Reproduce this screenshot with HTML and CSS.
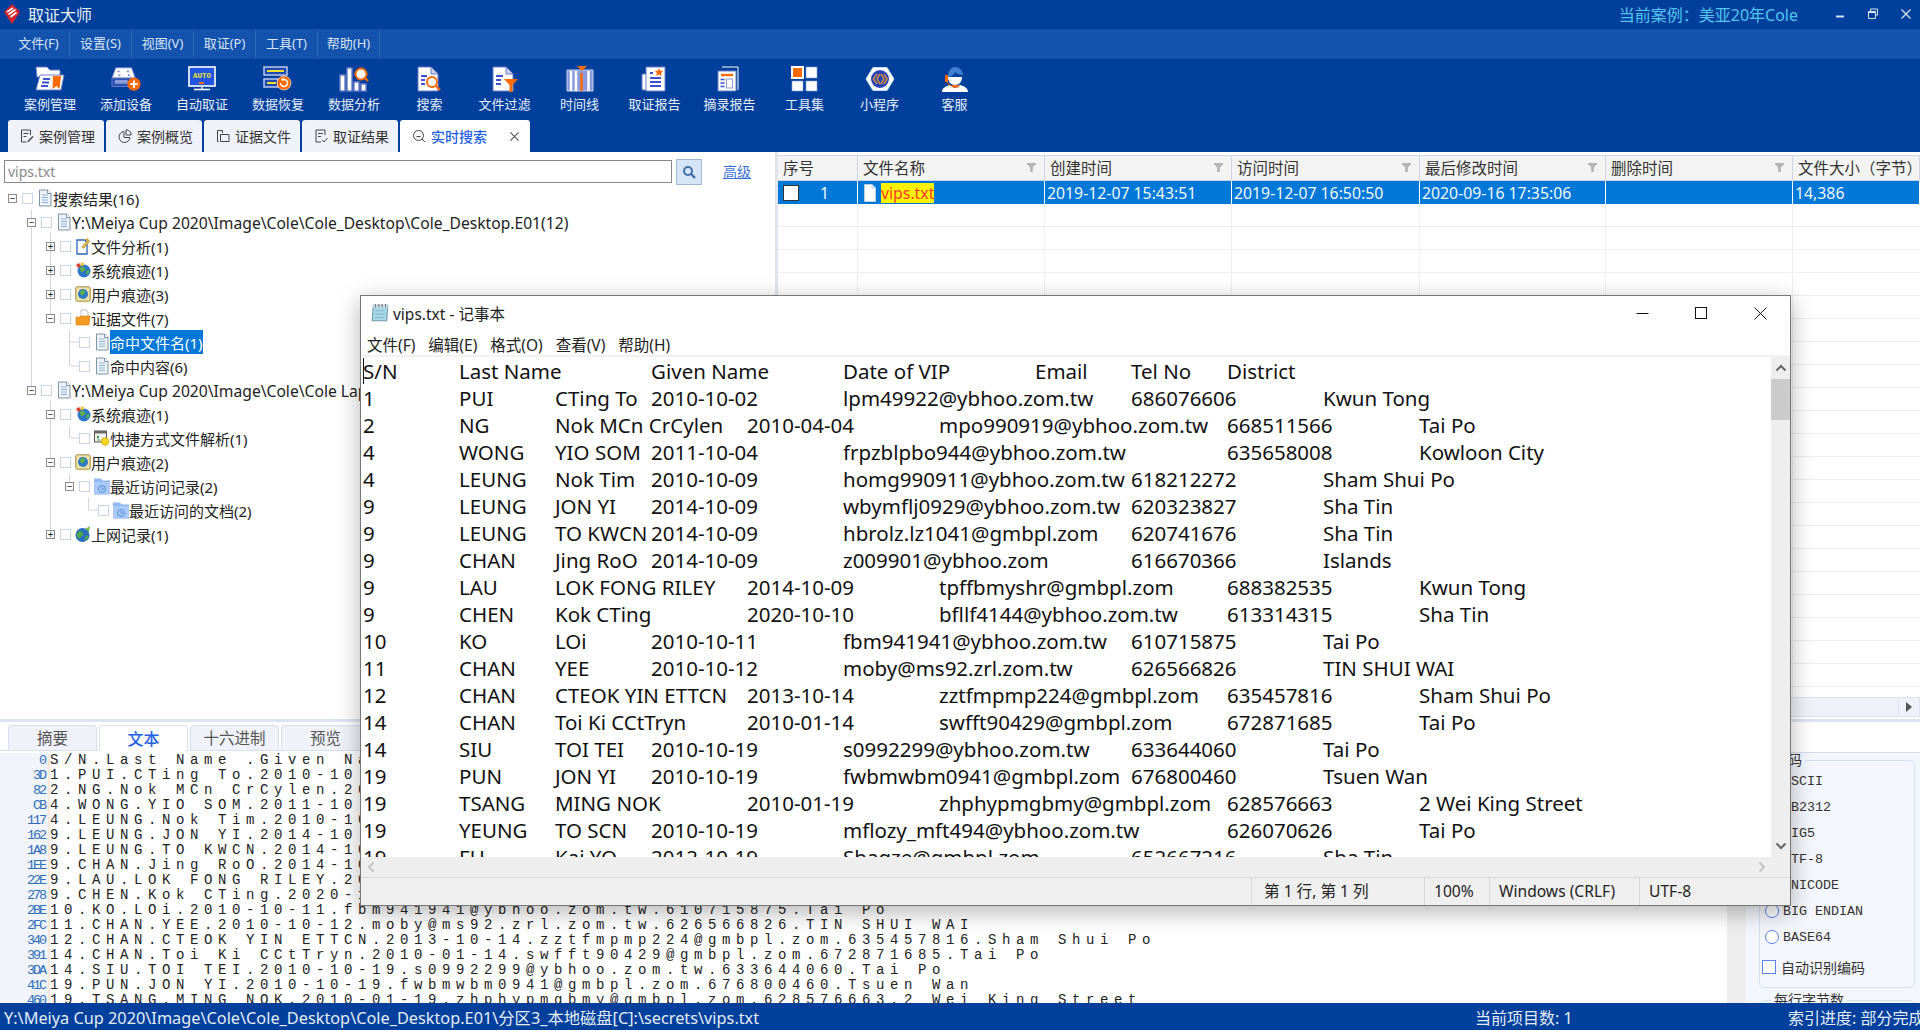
FILE: index.html
```html
<!DOCTYPE html>
<html lang="zh-CN">
  <head>
    <meta charset="UTF-8" />
    <title>取证大师</title>
    <link rel="stylesheet" href="styles.css">
  </head>
  <body>
    <svg class="defs" aria-hidden="true">
      <symbol id="i-doc" viewBox="0 0 16 18"><path d="M2.5 1h8l3.5 3.5v12.500h-11.500z" fill="#eef3fa" stroke="#7d93ab"/><path d="M10.500 1v3.500h3.500" fill="#fff" stroke="#7d93ab"/><path d="M5 6h6M5 8.500h6M5 11h6M5 13.500h6" stroke="#8fb0d6"/></symbol>
      <symbol id="i-analyse" viewBox="0 0 16 18"><path d="M2 3h8l2 3v11h-10z" fill="#fff" stroke="#2a66b8" stroke-width="1.300"/><path d="M7 10l6-7 1.500 1.500-6 7z" fill="#e8c24a" stroke="#8a6a1a" stroke-width=".6"/><path d="M12 1v3M10.500 2.500h3" stroke="#d9a520"/></symbol>
      <symbol id="i-trace" viewBox="0 0 16 18"><circle cx="9" cy="10" r="6.500" fill="#2f78c8"/><path d="M5 7c2-2 4-1 5 0s-1 3-2 4-3 0-3-4zM11 10l3-1 0 3-2 2z" fill="#5db04a"/><path d="M1 4l3-2 2 3-3 2z" fill="#d8402a"/><path d="M6 1.500l3 .500-.5 3-3-.5z" fill="#f2c230"/></symbol>
      <symbol id="i-user" viewBox="0 0 16 18"><rect x=".8" y="1.800" width="14.400" height="14.400" rx="1.500" fill="#efe2a8" stroke="#9c8a3c"/><circle cx="8" cy="9" r="5" fill="#2f78c8"/><path d="M5 7c1.500-2 4-2 5-1s-1 3-2 4-3 0-3-3z" fill="#5db04a"/></symbol>
      <symbol id="i-folder" viewBox="0 0 16 18"><path d="M6 1h5l2 2v7h-7z" fill="#fff" stroke="#bbb"/><path d="M1 8h4l1-1h9l-1 9h-13z" fill="#f59a23" stroke="#d77c10" stroke-width=".6"/></symbol>
      <symbol id="i-link" viewBox="0 0 16 18"><rect x=".5" y="2" width="12" height="11" fill="#f4f4f4" stroke="#555"/><path d="M.5 2h12v2.500h-12z" fill="#666"/><path d="M3 7l2 1-2 1M3 11h3" stroke="#2a9a3c"/><circle cx="11" cy="12.500" r="3.800" fill="#f4d31c" stroke="#a98f10" stroke-dasharray="1.500 1"/></symbol>
      <symbol id="i-recent" viewBox="0 0 16 18"><path d="M0 1.500h7l1.500 2h7.500v14h-16z" fill="#8fb8f4"/><path d="M0 5h16v12.500h-16z" fill="#a9c9f8"/><circle cx="8" cy="12" r="3.500" fill="none" stroke="#5a8ede"/><path d="M8 10v2.200h2" fill="none" stroke="#5a8ede"/></symbol>
      <symbol id="i-web" viewBox="0 0 16 18"><circle cx="7.500" cy="10" r="7" fill="#2c6fc0"/><path d="M3 7c2-2 4-1 5 1s-1 3-2 4-2 2-3 1-2-4 0-6zM10 12l3-2 0 3-3 3z" fill="#4fa746"/><path d="M10 4l5-3-1 6z" fill="#76b84a"/></symbol>
      <symbol id="i-funnel" viewBox="0 0 10 10"><path d="M0 0h10v1.500l-3.500 3.500v5h-3v-5l-3.500-3.500z" fill="#b4b4b4"/></symbol>
    </svg>

    <div class="app">
      <header class="titlebar">
        <svg class="logo" width="18" height="22" viewBox="0 0 18 22"><path d="M9 1l8 8-8 12-8-12z" fill="#d5232c"/><path d="M4 9l6-4M5.500 11.500l7-5M7.500 14l6-4.500" stroke="#fff" stroke-width="1.600"/></svg>
        <span class="app-name">取证大师</span>
        <span class="case-name">当前案例：美亚20年Cole</span>
        <div class="win-btns">
          <svg width="12" height="12" viewBox="0 0 12 12"><path d="M2 8.500h8" stroke="#d8e4f6" stroke-width="2"/></svg>
          <svg width="12" height="12" viewBox="0 0 12 12"><path d="M3.500 3v-2h7v6h-2M1.500 3.500h7v7h-7z" fill="none" stroke="#d8e4f6"/><path d="M1.500 4h7" stroke="#d8e4f6" stroke-width="2"/></svg>
          <svg width="12" height="12" viewBox="0 0 12 12"><path d="M1.500 1.500l9 9M10.500 1.500l-9 9" stroke="#d8e4f6" stroke-width="1.300"/></svg>
        </div>
      </header>

      <nav class="menubar">
        <span class="menu-item">文件(F)</span>
        <span class="menu-item">设置(S)</span>
        <span class="menu-item">视图(V)</span>
        <span class="menu-item">取证(P)</span>
        <span class="menu-item">工具(T)</span>
        <span class="menu-item">帮助(H)</span>
      </nav>

      <section class="toolbar">
        <div class="tools">
          <div class="tool">
            <svg viewBox="0 0 30 26"><path d="M1 1h11l3 3h10v7h-23z" fill="#fff" stroke="#6a7cc8"/><path d="M5 9h24l-3 15h-25z" fill="#fff" stroke="#6a7cc8"/><path d="M8 13h7M7 16.500h7M6 20h7" stroke="#3d50d0" stroke-width="1.800"/><path d="M18 10h8l-1.500 13-3-3-4 3z" fill="#ff6a00"/></svg>
            <span>案例管理</span>
          </div>
          <div class="tool">
            <svg viewBox="0 0 32 26"><path d="M5 1h17l4 11h-25z" fill="#fff" stroke="#6a7cc8"/><path d="M7 5h2M17 5h2M8 9h2M18 9h2" stroke="#6a7cc8" stroke-width="1.500"/><path d="M1 12h25v9h-25z" fill="#2a50b0" stroke="#6a7cc8"/><rect x="4" y="14" width="14" height="4" rx="1" fill="#8b9bdc"/><circle cx="24.500" cy="18.500" r="7" fill="#ff6a00"/><path d="M20.500 18.500h8M24.500 14.500v8" stroke="#fff" stroke-width="2"/></svg>
            <span>添加设备</span>
          </div>
          <div class="tool">
            <svg viewBox="0 0 30 26"><rect x="2" y="1" width="26" height="19" fill="#1f55e0" stroke="#fff" stroke-width="1.600"/><text x="15" y="11.500" class="auto-text">AUTO</text><rect x="12" y="16" width="5" height="2" fill="#ff6a00"/><path d="M14 20h2v3h-2z" fill="#b9c3ea"/><path d="M7 23.500h16" stroke="#fff" stroke-width="1.600"/></svg>
            <span>自动取证</span>
          </div>
          <div class="tool">
            <svg viewBox="0 0 30 26"><rect x="1" y="1" width="23" height="8" fill="#1e49b4" stroke="#c9d0ee" stroke-width="1.400"/><path d="M4 5h17" stroke="#f2e22c" stroke-width="2"/><rect x="1" y="13" width="14" height="8" fill="#1e49b4" stroke="#c9d0ee" stroke-width="1.400"/><path d="M4 17h9" stroke="#f2e22c" stroke-width="2"/><circle cx="21" cy="17" r="7" fill="#ff6a00" stroke="#fff" stroke-width=".6"/><path d="M17.500 17a3.500 3.500 0 1 0 3.500-3.500h-1.500" fill="none" stroke="#fff" stroke-width="1.600"/><path d="M20.500 11.500l-2.500 2 2.500 2z" fill="#fff"/></svg>
            <span>数据恢复</span>
          </div>
          <div class="tool">
            <svg viewBox="0 0 30 26"><rect x="1" y="9" width="5" height="16" fill="#fff" stroke="#6a7cc8" stroke-width="1.400"/><rect x="8" y="2" width="5" height="23" fill="#fff" stroke="#6a7cc8" stroke-width="1.400"/><rect x="15" y="16" width="5" height="9" fill="#fff" stroke="#6a7cc8" stroke-width="1.400"/><rect x="22" y="18" width="5" height="7" fill="#fff" stroke="#6a7cc8" stroke-width="1.400"/><circle cx="22" cy="8" r="5.500" fill="#fff" stroke="#ff6a00" stroke-width="2"/><path d="M26 12l3 3" stroke="#ff6a00" stroke-width="2.400"/></svg>
            <span>数据分析</span>
          </div>
          <div class="tool">
            <svg viewBox="0 0 30 26"><path d="M3 1h13l7 7v17h-20z" fill="#fff" stroke="#6a7cc8"/><path d="M16 1v7h7" fill="#c9d0ee" stroke="#6a7cc8"/><path d="M6 10h6M6 14h4M6 18h4" stroke="#3d50d0" stroke-width="1.800"/><circle cx="17" cy="16" r="5" fill="#fff" stroke="#ff6a00" stroke-width="2"/><path d="M21 20l4 4" stroke="#ff6a00" stroke-width="2.400"/></svg>
            <span>搜索</span>
          </div>
          <div class="tool">
            <svg viewBox="0 0 30 26"><path d="M3 1h13l7 7v17h-20z" fill="#fff" stroke="#6a7cc8"/><path d="M16 1v7h7" fill="#c9d0ee" stroke="#6a7cc8"/><path d="M6 10h7M6 14h5M6 18h5" stroke="#3d50d0" stroke-width="1.800"/><path d="M14 13h14l-5.500 6v7h-3v-7z" fill="#ff6a00"/></svg>
            <span>文件过滤</span>
          </div>
          <div class="tool">
            <svg viewBox="0 0 30 26"><path d="M2 4h26v21h-26z" fill="#8b9bdc" stroke="#c9d0ee"/><path d="M6 5v20M11 5v20M23.500 5v20" stroke="#fff" stroke-width="2.500"/><path d="M16.500 7v18" stroke="#ff6a00" stroke-width="2.500"/><path d="M12 0h10l-5 5z" fill="#ff6a00"/></svg>
            <span>时间线</span>
          </div>
          <div class="tool">
            <svg viewBox="0 0 30 26"><rect x="2" y="8" width="6" height="16" rx="1" fill="#fff" stroke="#6a7cc8"/><path d="M6 1h19v24h-19z" fill="#fff" stroke="#6a7cc8"/><path d="M10 7h3M10 12h11M10 16h11M10 20h11" stroke="#3d50d0" stroke-width="1.800"/><path d="M19 2l1.300 2.700 3 .3-2.200 2 .6 3-2.700-1.500-2.700 1.500.6-3-2.200-2 3-.3z" fill="#ff6a00"/></svg>
            <span>取证报告</span>
          </div>
          <div class="tool">
            <svg viewBox="0 0 30 26"><path d="M7 1h16v23" fill="none" stroke="#fff"/><path d="M3 5h18v20h-18z" fill="#fff" stroke="#6a7cc8"/><path d="M6 9h12" stroke="#ff6a00" stroke-width="2.400"/><path d="M5.500 13.500h4M5.500 17h4M5.500 20.500h4" stroke="#3d50d0" stroke-width="1.600"/><rect x="11.500" y="13" width="6" height="9" fill="#fff" stroke="#8b9bdc"/></svg>
            <span>摘录报告</span>
          </div>
          <div class="tool">
            <svg viewBox="0 0 30 26"><rect x="2" y="1" width="11" height="11" fill="#ff6a00" stroke="#fff" stroke-width="2"/><rect x="16" y="1" width="11" height="11" fill="#fff" stroke="#8b9bdc" stroke-width=".6"/><rect x="2" y="15" width="11" height="10" fill="#fff" stroke="#8b9bdc" stroke-width=".6"/><rect x="16" y="15" width="11" height="10" fill="#fff" stroke="#8b9bdc" stroke-width=".6"/></svg>
            <span>工具集</span>
          </div>
          <div class="tool">
            <svg viewBox="0 0 30 26"><path d="M8 1.500h14l7 11.500-7 11.500h-14l-7-11.500z" fill="#fff" stroke="#bfe4f5"/><circle cx="15" cy="13" r="9" fill="#2a45b8"/><path d="M12 8l-3.500 5 3.500 5M15 8l-3 5 3 5M16 8l3 5-3 5M19 8l3 5-3 5" fill="none" stroke="#f59a23" stroke-width="1.300"/></svg>
            <span>小程序</span>
          </div>
          <div class="tool">
            <svg viewBox="0 0 30 26"><path d="M2 26c0-4 4-6 8-7l5 3 5-3c4 1 8 3 8 7z" fill="#fff"/><path d="M8 11c0 5 3 8 7 8s7-3 7-8z" fill="#fff"/><path d="M8 11c0-6 3-10 7-10s8 3 8 8c-3 0-6-1-8-3-1 2-3 5-7 5z" fill="#3f7fd0"/><rect x="5" y="9" width="3" height="7" rx="1" fill="#ff6a00"/><path d="M7 16c1 3 4 4 6 4" fill="none" stroke="#ff6a00"/><rect x="12" y="19" width="7" height="2.500" rx="1" fill="#ff6a00"/></svg>
            <span>客服</span>
          </div>
        </div>
        <div class="tabs">
          <div class="tab">
            <svg viewBox="0 0 14 14"><path d="M10.500 6v-5h-9v12h5M3.500 4.500h5M3.500 7.500h3" fill="none" stroke="#444"/><path d="M7.500 12l5-5 1 1-5 5h-1z" fill="#444"/></svg>案例管理
          </div>
          <div class="tab">
            <svg viewBox="0 0 14 14"><path d="M6 2.500a5.500 5.500 0 1 0 6 6h-6z" fill="none" stroke="#444"/><path d="M8 .8v5.200h5.200a5.200 5.200 0 0 0-5.200-5.200z" fill="none" stroke="#444"/></svg>案例概览
          </div>
          <div class="tab">
            <svg viewBox="0 0 14 14"><path d="M1.500 4v-2.500h5v2.500M1.500 4v8.500h1M4.500 5.500h8.500v7h-8.500z" fill="none" stroke="#444"/></svg>证据文件
          </div>
          <div class="tab">
            <svg viewBox="0 0 14 14"><path d="M11 6v-5h-9v12h5M4 4.500h5M4 7.500h3" fill="none" stroke="#444"/><path d="M8 11l2 2 3.500-4" fill="none" stroke="#444"/></svg>取证结果
          </div>
          <div class="tab tab-on">
            <svg viewBox="0 0 14 14"><circle cx="6.500" cy="6.500" r="5" fill="none" stroke="#444"/><path d="M4.500 7.500h4M10 10l3 3" stroke="#444"/></svg>实时搜索
            <svg class="tab-x" viewBox="0 0 12 12"><path d="M1.500 1.500l9 9M10.500 1.500l-9 9" stroke="#555" stroke-width="1.200"/></svg>
          </div>
        </div>
      </section>

      <main class="main">
        <div class="top-pane">
          <div class="left-pane">
            <div class="search-row">
              <input class="search-input" type="text" value="vips.txt" />
              <span class="search-btn">
                <svg width="14" height="14" viewBox="0 0 14 14"><circle cx="6" cy="6" r="4" fill="none" stroke="#3f6fa8" stroke-width="2"/><path d="M9 9l4 4" stroke="#3f6fa8" stroke-width="2.400"/></svg>
              </span>
              <a class="adv-link">高级</a>
            </div>
            <div class="tree">
              <svg class="tree-lines" width="200" height="400" aria-hidden="true">
                <path d="M31.500 24v180M31.500 36h-2M50.500 46v86M69.500 144v36h10M69.500 156h10M50.500 214v130M69.500 240v12h10M69.500 288v12M88.500 312v12h10" fill="none" stroke="#d4d4d4"/>
              </svg>
              <div class="tree-row lv0"><i class="exp">−</i><i class="cb"></i><svg class="ti"><use href="#i-doc"/></svg><span>搜索结果(16)</span></div>
              <div class="tree-row lv1"><i class="exp">−</i><i class="cb"></i><svg class="ti"><use href="#i-doc"/></svg><span class="tree-path">Y:\Meiya Cup 2020\Image\Cole\Cole_Desktop\Cole_Desktop.E01(12)</span></div>
              <div class="tree-row lv2"><i class="exp">+</i><i class="cb"></i><svg class="ti"><use href="#i-analyse"/></svg><span>文件分析(1)</span></div>
              <div class="tree-row lv2"><i class="exp">+</i><i class="cb"></i><svg class="ti"><use href="#i-trace"/></svg><span>系统痕迹(1)</span></div>
              <div class="tree-row lv2"><i class="exp">+</i><i class="cb"></i><svg class="ti"><use href="#i-user"/></svg><span>用户痕迹(3)</span></div>
              <div class="tree-row lv2"><i class="exp">−</i><i class="cb"></i><svg class="ti"><use href="#i-folder"/></svg><span>证据文件(7)</span></div>
              <div class="tree-row lv3"><i class="exp none"></i><i class="cb"></i><svg class="ti"><use href="#i-doc"/></svg><span class="tree-sel">命中文件名(1)</span></div>
              <div class="tree-row lv3"><i class="exp none"></i><i class="cb"></i><svg class="ti"><use href="#i-doc"/></svg><span>命中内容(6)</span></div>
              <div class="tree-row lv1"><i class="exp">−</i><i class="cb"></i><svg class="ti"><use href="#i-doc"/></svg><span class="tree-path">Y:\Meiya Cup 2020\Image\Cole\Cole Laptop\Cole Laptop.E01(4)</span></div>
              <div class="tree-row lv2"><i class="exp">−</i><i class="cb"></i><svg class="ti"><use href="#i-trace"/></svg><span>系统痕迹(1)</span></div>
              <div class="tree-row lv3"><i class="exp none"></i><i class="cb"></i><svg class="ti"><use href="#i-link"/></svg><span>快捷方式文件解析(1)</span></div>
              <div class="tree-row lv2"><i class="exp">−</i><i class="cb"></i><svg class="ti"><use href="#i-user"/></svg><span>用户痕迹(2)</span></div>
              <div class="tree-row lv3"><i class="exp">−</i><i class="cb"></i><svg class="ti"><use href="#i-recent"/></svg><span>最近访问记录(2)</span></div>
              <div class="tree-row lv4"><i class="exp none"></i><i class="cb"></i><svg class="ti"><use href="#i-recent"/></svg><span>最近访问的文档(2)</span></div>
              <div class="tree-row lv2"><i class="exp">+</i><i class="cb"></i><svg class="ti"><use href="#i-web"/></svg><span>上网记录(1)</span></div>
            </div>
          </div>

          <div class="right-pane">
            <div class="grid-row grid-head">
              <div class="cell">序号</div>
              <div class="cell">文件名称<svg class="filter"><use href="#i-funnel"/></svg></div>
              <div class="cell">创建时间<svg class="filter"><use href="#i-funnel"/></svg></div>
              <div class="cell">访问时间<svg class="filter"><use href="#i-funnel"/></svg></div>
              <div class="cell">最后修改时间<svg class="filter"><use href="#i-funnel"/></svg></div>
              <div class="cell">删除时间<svg class="filter"><use href="#i-funnel"/></svg></div>
              <div class="cell">文件大小（字节）</div>
            </div>
            <div class="grid-row grid-sel">
              <div class="cell cell-no"><i class="row-cb"></i><span>1</span></div>
              <div class="cell"><svg class="file-ico" viewBox="0 0 12 18"><path d="M.5.500h7.500l3.500 3.500v13.500h-11z" fill="#fff" stroke="#b8cfe8"/><path d="M8 .5v3.500h3.500" fill="#d6e6f6" stroke="#b8cfe8"/></svg><mark class="hit">vips.txt</mark></div>
              <div class="cell">2019-12-07 15:43:51</div>
              <div class="cell">2019-12-07 16:50:50</div>
              <div class="cell">2020-09-16 17:35:06</div>
              <div class="cell"></div>
              <div class="cell">14,386</div>
            </div>
            <div class="grid-blank"></div>
            <div class="h-scroll"><span class="h-scroll-btn"></span></div>
          </div>
        </div>

        <div class="bottom-pane">
          <div class="view-pane">
            <div class="view-tabs">
              <div class="view-tab">摘要</div>
              <div class="view-tab view-tab-on">文本</div>
              <div class="view-tab">十六进制</div>
              <div class="view-tab">预览</div>
            </div>
            <div class="hex-view">
              <div class="hex-row"><b>0</b><span>S/N.Last Name .Given Name.Date of VIP.Email.Tel No.District</span></div>
              <div class="hex-row"><b>3D</b><span>1.PUI.CTing To.2010-10-02.lpm49922@ybhoo.zom.tw.686076606.Kwun Tong</span></div>
              <div class="hex-row"><b>82</b><span>2.NG.Nok MCn CrCylen.2010-04-04.mpo990919@ybhoo.zom.tw.668511566.Tai Po</span></div>
              <div class="hex-row"><b>CB</b><span>4.WONG.YIO SOM.2011-10-04.frpzblpbo944@ybhoo.zom.tw.635658008.Kowloon City</span></div>
              <div class="hex-row"><b>117</b><span>4.LEUNG.Nok Tim.2010-10-09.homg990911@ybhoo.zom.tw.618212272.Sham Shui Po</span></div>
              <div class="hex-row"><b>162</b><span>9.LEUNG.JON YI.2014-10-09.wbymflj0929@ybhoo.zom.tw.620323827.Sha Tin</span></div>
              <div class="hex-row"><b>1A8</b><span>9.LEUNG.TO KWCN.2014-10-09.hbrolz.lz1041@gmbpl.zom.620741676.Sha Tin</span></div>
              <div class="hex-row"><b>1EE</b><span>9.CHAN.Jing RoO.2014-10-09.z009901@ybhoo.zom.616670366.Islands</span></div>
              <div class="hex-row"><b>22E</b><span>9.LAU.LOK FONG RILEY.2014-10-09.tpffbmyshr@gmbpl.zom.688382535.Kwun Tong</span></div>
              <div class="hex-row"><b>278</b><span>9.CHEN.Kok CTing.2020-10-10.bfllf4144@ybhoo.zom.tw.613314315.Sha Tin</span></div>
              <div class="hex-row"><b>2BE</b><span>10.KO.LOi.2010-10-11.fbm941941@ybhoo.zom.tw.610715875.Tai Po</span></div>
              <div class="hex-row"><b>2FC</b><span>11.CHAN.YEE.2010-10-12.moby@ms92.zrl.zom.tw.626566826.TIN SHUI WAI</span></div>
              <div class="hex-row"><b>340</b><span>12.CHAN.CTEOK YIN ETTCN.2013-10-14.zztfmpmp224@gmbpl.zom.635457816.Sham Shui Po</span></div>
              <div class="hex-row"><b>391</b><span>14.CHAN.Toi Ki CCtTryn.2010-01-14.swfft90429@gmbpl.zom.672871685.Tai Po</span></div>
              <div class="hex-row"><b>3DA</b><span>14.SIU.TOI TEI.2010-10-19.s0992299@ybhoo.zom.tw.633644060.Tai Po</span></div>
              <div class="hex-row"><b>41C</b><span>19.PUN.JON YI.2010-10-19.fwbmwbm0941@gmbpl.zom.676800460.Tsuen Wan</span></div>
              <div class="hex-row"><b>460</b><span>19.TSANG.MING NOK.2010-01-19.zhphypmgbmy@gmbpl.zom.628576663.2 Wei King Street</span></div>
            </div>
          </div>
          <div class="gutter"></div>
          <aside class="side-panel">
            <fieldset class="group">
              <legend>编码</legend>
              <label class="enc"><i class="radio"></i>ASCII</label>
              <label class="enc"><i class="radio"></i>GB2312</label>
              <label class="enc"><i class="radio"></i>BIG5</label>
              <label class="enc"><i class="radio"></i>UTF-8</label>
              <label class="enc"><i class="radio"></i>UNICODE</label>
              <label class="enc"><i class="radio"></i>BIG ENDIAN</label>
              <label class="enc"><i class="radio"></i>BASE64</label>
              <label class="auto-enc"><i class="auto-cb"></i>自动识别编码</label>
            </fieldset>
            <fieldset class="group group-next">
              <legend>每行字节数</legend>
            </fieldset>
          </aside>
        </div>
      </main>

      <footer class="statusbar">
        <span class="st-path">Y:\Meiya Cup 2020\Image\Cole\Cole_Desktop\Cole_Desktop.E01\分区3_本地磁盘[C]:\secrets\vips.txt</span>
        <span class="st-count">当前项目数: 1</span>
        <span class="st-index">索引进度: 部分完成</span>
      </footer>
    </div>

    <!-- notepad floats over the app -->
    <div class="notepad">
      <div class="np-title">
        <svg width="20" height="20" viewBox="0 0 18 18"><path d="M3 2h13l-1 14h-13z" fill="#a8d8e8" stroke="#6b9aa8"/><path d="M3 2h13v2h-13z" fill="#d8e8ee"/><path d="M5 1v3M8 1v3M11 1v3M14 1v3" stroke="#777"/><path d="M5 7h8M5 10h8M4.500 13h8" stroke="#7fb8cc"/></svg>
        <span>vips.txt - 记事本</span>
        <div class="np-btns">
          <svg width="13" height="13" viewBox="0 0 13 13"><path d="M.5 6.500h12" stroke="#111"/></svg>
          <svg width="13" height="13" viewBox="0 0 13 13"><rect x=".5" y=".5" width="11" height="11" fill="none" stroke="#111"/></svg>
          <svg width="13" height="13" viewBox="0 0 13 13"><path d="M.5.500l12 12M12.500.5l-12 12" stroke="#111"/></svg>
        </div>
      </div>
      <div class="np-menu">
        <span>文件(F)</span><span>编辑(E)</span><span>格式(O)</span><span>查看(V)</span><span>帮助(H)</span>
      </div>
      <div class="np-body">
        <pre class="np-text">S/N	Last Name	Given Name	Date of VIP	Email	Tel No	District
1	PUI	CTing To	2010-10-02	lpm49922@ybhoo.zom.tw	686076606	Kwun Tong
2	NG	Nok MCn CrCylen	2010-04-04	mpo990919@ybhoo.zom.tw	668511566	Tai Po
4	WONG	YIO SOM	2011-10-04	frpzblpbo944@ybhoo.zom.tw		635658008	Kowloon City
4	LEUNG	Nok Tim	2010-10-09	homg990911@ybhoo.zom.tw	618212272	Sham Shui Po
9	LEUNG	JON YI	2014-10-09	wbymflj0929@ybhoo.zom.tw	620323827	Sha Tin
9	LEUNG	TO KWCN	2014-10-09	hbrolz.lz1041@gmbpl.zom	620741676	Sha Tin
9	CHAN	Jing RoO	2014-10-09	z009901@ybhoo.zom	616670366	Islands
9	LAU	LOK FONG RILEY	2014-10-09	tpffbmyshr@gmbpl.zom	688382535	Kwun Tong
9	CHEN	Kok CTing	2020-10-10	bfllf4144@ybhoo.zom.tw	613314315	Sha Tin
10	KO	LOi	2010-10-11	fbm941941@ybhoo.zom.tw	610715875	Tai Po
11	CHAN	YEE	2010-10-12	moby@ms92.zrl.zom.tw	626566826	TIN SHUI WAI
12	CHAN	CTEOK YIN ETTCN	2013-10-14	zztfmpmp224@gmbpl.zom	635457816	Sham Shui Po
14	CHAN	Toi Ki CCtTryn	2010-01-14	swfft90429@gmbpl.zom	672871685	Tai Po
14	SIU	TOI TEI	2010-10-19	s0992299@ybhoo.zom.tw	633644060	Tai Po
19	PUN	JON YI	2010-10-19	fwbmwbm0941@gmbpl.zom	676800460	Tsuen Wan
19	TSANG	MING NOK	2010-01-19	zhphypmgbmy@gmbpl.zom	628576663	2 Wei King Street
19	YEUNG	TO SCN	2010-10-19	mflozy_mft494@ybhoo.zom.tw	626070626	Tai Po
19	FU	Kai YO	2012-10-19	Shagze@gmbpl.zom	652667216	Sha Tin</pre>
        <div class="np-vscroll">
          <svg width="12" height="8" viewBox="0 0 12 8"><path d="M1.500 6.500l4.500-4.500 4.500 4.500" fill="none" stroke="#666" stroke-width="2"/></svg>
          <span class="np-thumb"></span>
          <svg class="np-down" width="12" height="8" viewBox="0 0 12 8"><path d="M1.500 1.500l4.500 4.500 4.500-4.500" fill="none" stroke="#666" stroke-width="2"/></svg>
        </div>
      </div>
      <div class="np-hscroll">
        <svg width="8" height="12" viewBox="0 0 8 12"><path d="M6.500 1.500l-4.500 4.500 4.500 4.500" fill="none" stroke="#c4c4c4" stroke-width="2"/></svg>
        <svg width="8" height="12" viewBox="0 0 8 12"><path d="M1.500 1.500l4.500 4.500-4.500 4.500" fill="none" stroke="#c4c4c4" stroke-width="2"/></svg>
      </div>
      <div class="np-status">
        <span class="np-s1">第 1 行, 第 1 列</span>
        <span class="np-s2">100%</span>
        <span class="np-s3">Windows (CRLF)</span>
        <span class="np-s4">UTF-8</span>
      </div>
    </div>
  </body>
</html>
```

FILE: styles.css
```css
* {
  box-sizing: border-box;
}
html,
body {
  margin: 0;
  height: 100%;
  overflow: hidden;
}
body {
  position: relative;
  font-family: "Noto Sans", "Noto Sans CJK SC", sans-serif;
  font-size: 15px;
  color: #222;
  background: #fff;
}
.defs {
  position: absolute;
  width: 0;
  height: 0;
}
i {
  font-style: normal;
}
.app {
  display: flex;
  flex-direction: column;
  height: 1030px;
}

/* title, menu, toolbar */
.titlebar {
  display: flex;
  align-items: center;
  height: 29px;
  flex: none;
  padding: 0 0 2px 3px;
  background: #00409c;
  color: #e6edf8;
}
.logo {
  margin-right: 7px;
}
.app-name {
  font-size: 16px;
}
.case-name {
  margin-left: auto;
  color: #55c3f0;
  font-size: 16px;
}
.win-btns {
  display: flex;
  gap: 21px;
  width: 122px;
  padding-left: 36px;
}
.menubar {
  display: flex;
  height: 30px;
  flex: none;
  padding-left: 8px;
  background: #1353ae;
  color: #d9e4f6;
  font-size: 13px;
}
.menu-item {
  display: flex;
  align-items: center;
  justify-content: center;
  width: 62px;
  margin: 2px 0;
  padding-bottom: 3px;
  border-right: 1px solid #2e68ba;
}
.toolbar {
  display: flex;
  flex-direction: column;
  height: 93px;
  flex: none;
  background: #00409c;
}
.tools {
  display: flex;
  height: 61px;
  padding: 7px 0 0 12px;
}
.tool {
  display: flex;
  flex-direction: column;
  align-items: center;
  width: 75px;
  color: #e6edf8;
  font-size: 13px;
}
.tool:nth-child(-n+5) {
  width: 76px;
}
.tool svg {
  width: 30px;
  height: 26px;
}
.tool span {
  margin-top: 2px;
  line-height: 20px;
}
.auto-text {
  fill: #f5e625;
  font-family: "Liberation Mono", monospace;
  font-size: 7.500px;
  font-weight: bold;
  text-anchor: middle;
}
.tabs {
  display: flex;
  gap: 2px;
  height: 32px;
  padding-left: 8px;
}
.tab {
  display: flex;
  align-items: center;
  width: 96px;
  padding-left: 12px;
  border-radius: 3px 3px 0 0;
  background: #eff2f8;
  color: #333;
  font-size: 14px;
}
.tab svg {
  width: 14px;
  height: 14px;
  margin-right: 5px;
}
.tab-on {
  width: 130px;
  background: #fff;
  color: #1f5fe0;
  font-weight: 500;
}
.tab .tab-x {
  width: 11px;
  height: 11px;
  margin: 0 0 0 22px;
}

/* main split */
.main {
  display: flex;
  flex-direction: column;
  flex: 1;
  min-height: 0;
}
.top-pane {
  display: flex;
  height: 570px;
  flex: none;
  border-bottom: 3px solid #dce4f4;
}
.left-pane {
  width: 778px;
  flex: none;
  border-right: 3px solid #dfe4ee;
}
.search-row {
  display: flex;
  align-items: flex-start;
  height: 34px;
  padding: 8px 0 0 4px;
}
.search-input {
  width: 668px;
  height: 23px;
  padding: 0 3px;
  border: 1px solid #888;
  color: #888;
  font: inherit;
  font-size: 14px;
}
.search-btn {
  display: flex;
  align-items: center;
  justify-content: center;
  width: 26px;
  height: 26px;
  margin: -1px 0 0 4px;
  border: 1px solid #9db8d8;
  background: #d6e6f8;
}
.adv-link {
  margin-left: 21px;
  color: #3a6fd8;
  font-size: 14px;
  line-height: 24px;
  text-decoration: underline;
}

/* tree */
.tree {
  position: relative;
}
.tree-lines {
  position: absolute;
  top: 0;
  left: 0;
}
.tree-row {
  position: relative;
  display: flex;
  align-items: center;
  height: 24px;
  white-space: nowrap;
}
.tree-path {
  margin-top: 2px;
  font-size: 15.650px;
}
.lv0 {
  padding-left: 8px;
}
.lv1 {
  padding-left: 27px;
}
.lv2 {
  padding-left: 46px;
}
.lv3 {
  padding-left: 65px;
}
.lv4 {
  padding-left: 84px;
}
.exp {
  display: flex;
  align-items: center;
  justify-content: center;
  width: 9px;
  height: 9px;
  margin-right: 5px;
  flex: none;
  border: 1px solid #8a8a8a;
  background: #fff;
  color: #222;
  font-size: 10px;
  line-height: 1;
}
.exp.none {
  border: none;
  background: none;
}
.cb {
  width: 11px;
  height: 11px;
  margin-right: 4px;
  flex: none;
  border: 1px solid #c6d4ee;
  background: #fff;
}
.ti {
  width: 16px;
  height: 18px;
  flex: none;
}
.tree-sel {
  display: flex;
  align-items: center;
  height: 24px;
  background: #0078d7;
  color: #fff;
}

/* result grid */
.right-pane {
  display: flex;
  flex-direction: column;
  flex: 1;
  min-width: 0;
  padding-top: 3px;
}
.grid-row {
  display: grid;
  grid-template-columns: 80px 187px 187px 188px 186px 187px 127px;
}
.grid-head {
  height: 26px;
  background: #f3f3f3;
  border-top: 1px solid #cfd2e2;
  border-bottom: 1px solid #cfd2e2;
}
.grid-head .cell {
  position: relative;
  display: flex;
  align-items: center;
  padding: 0 0 2px 5px;
  border-right: 1px solid #cfd2e2;
  color: #333;
  font-size: 15.500px;
  white-space: nowrap;
}
.filter {
  position: absolute;
  top: 7px;
  right: 8px;
  width: 9px;
  height: 9px;
}
.grid-sel {
  height: 23px;
  background: #0078d7;
  color: #f2f7fd;
}
.grid-sel .cell {
  display: flex;
  align-items: center;
  padding-left: 2px;
  border-right: 1px solid #fff;
  font-size: 15.800px;
}
.grid-sel .cell-no {
  padding-left: 5px;
}
.row-cb {
  width: 16px;
  height: 16px;
  border: 1px solid #333;
  background: #fff;
}
.cell-no span {
  margin-left: 21px;
}
.file-ico {
  width: 12px;
  height: 18px;
  margin: 0 5px 0 4px;
}
.hit {
  height: 20px;
  background: #fff200;
  color: #ff3b30;
  line-height: 20px;
}
.grid-blank {
  flex: 1;
  background-color: #fff;
  background-image:
    linear-gradient(#eee, #eee), linear-gradient(#eee, #eee), linear-gradient(#eee, #eee),
    linear-gradient(#eee, #eee), linear-gradient(#eee, #eee), linear-gradient(#eee, #eee),
    repeating-linear-gradient(to bottom, transparent 0 22px, #eee 22px 23px);
  background-repeat: no-repeat;
  background-size: 1px 100%, 1px 100%, 1px 100%, 1px 100%, 1px 100%, 1px 100%, 100% 100%;
  background-position: 79px 0, 266px 0, 453px 0, 641px 0, 827px 0, 1014px 0, 0 0;
}
.h-scroll {
  display: flex;
  justify-content: flex-end;
  height: 20px;
  flex: none;
  margin-bottom: 2px;
  border: 1px solid #dbe3f2;
  background: #eff2f8;
}
.h-scroll-btn {
  position: relative;
  width: 21px;
  border-left: 1px solid #dbe3f2;
}
.h-scroll-btn::after {
  content: "";
  position: absolute;
  top: 4px;
  left: 7px;
  border-left: 6px solid #555;
  border-top: 5px solid transparent;
  border-bottom: 5px solid transparent;
}

/* text view */
.bottom-pane {
  display: flex;
  flex: 1;
  min-height: 0;
}
.view-pane {
  display: flex;
  flex-direction: column;
  width: 1727px;
  flex: none;
}
.view-tabs {
  display: flex;
  gap: 2px;
  height: 29px;
  flex: none;
  padding: 3px 0 0 8px;
  border-bottom: 1px solid #d8e0f0;
}
.view-tab {
  display: flex;
  align-items: center;
  justify-content: center;
  width: 89px;
  padding-bottom: 2px;
  border: 1px solid #d8e0f0;
  border-bottom: none;
  border-radius: 4px 4px 0 0;
  background: #eff2f8;
  color: #555;
  font-size: 15.500px;
}
.view-tab-on {
  height: 26px;
  background: #fff;
  color: #1f5fe0;
  font-weight: 500;
  font-size: 16px;
}
.hex-view {
  flex: 1;
  overflow: hidden;
  padding-top: 2px;
  font-family: "Liberation Mono", monospace;
}
.hex-row {
  display: flex;
  height: 15px;
  line-height: 15px;
  white-space: pre;
}
.hex-row b {
  width: 50px;
  flex: none;
  padding-right: 3px;
  border-left: 8px solid #f1f4fa;
  border-right: 2px solid #fbe8dc;
  background: #f1f4fa;
  color: #2f6fb8;
  font-size: 13.500px;
  font-weight: normal;
  letter-spacing: -2.100px;
  text-align: right;
}
.hex-row span {
  color: #222;
  font-size: 14px;
  letter-spacing: 5.600px;
}
.gutter {
  width: 19px;
  flex: none;
  background: #eee;
}

/* side options */
.side-panel {
  flex: 1;
  min-width: 0;
  margin-top: 30px;
  padding: 0 5px 0 13px;
  border-top: 1px solid #d5ddef;
  background: #f3f6fc;
}
.group {
  margin: 0;
  padding: 1px 5px 0;
  height: 235px;
  border: 1px solid #d5dff2;
  border-radius: 5px;
}
.group legend {
  margin-left: 6px;
  padding: 0 3px;
  color: #333;
  font-size: 14px;
  line-height: 14px;
}
.group-next {
  margin-top: 5px;
  height: 40px;
}
.enc {
  display: flex;
  align-items: center;
  height: 26px;
  color: #333;
  font-family: "Liberation Mono", monospace;
  font-size: 13.330px;
  white-space: pre;
}
.radio {
  width: 14px;
  height: 14px;
  margin-right: 4px;
  border: 1px solid #5a82e8;
  border-radius: 50%;
  background: #fff;
}
.auto-enc {
  display: flex;
  align-items: center;
  height: 30px;
  margin-top: 2px;
  color: #333;
  font-size: 14px;
}
.auto-cb {
  width: 14px;
  height: 14px;
  margin: 0 5px 0 -3px;
  border: 1px solid #5a82e8;
  background: #fff;
}

/* status bar */
.statusbar {
  display: flex;
  align-items: center;
  height: 27px;
  flex: none;
  padding-left: 4px;
  background: #00409c;
  color: #e4ecf8;
  font-size: 16px;
  overflow: hidden;
  white-space: nowrap;
}
.st-path {
  width: 1471px;
  flex: none;
  font-size: 16.300px;
}
.st-count {
  width: 313px;
  flex: none;
}

/* notepad window */
.notepad {
  position: absolute;
  top: 295px;
  left: 360px;
  display: flex;
  flex-direction: column;
  width: 1431px;
  height: 611px;
  border: 1px solid #777;
  background: #fff;
  box-shadow: 0 6px 22px rgba(0, 0, 0, 0.3);
  color: #222;
}
.np-title {
  display: flex;
  align-items: center;
  height: 38px;
  flex: none;
  padding: 0 0 4px 9px;
  font-size: 15.500px;
}
.np-title span {
  margin-left: 3px;
}
.np-btns {
  display: flex;
  gap: 46px;
  margin-left: auto;
  padding-right: 23px;
}
.np-menu {
  display: flex;
  gap: 13px;
  align-items: center;
  height: 23px;
  flex: none;
  padding-left: 6px;
  border-bottom: 2px solid #f2f2f2;
  font-size: 15.500px;
}
.np-body {
  position: relative;
  display: flex;
  flex: 1;
  min-height: 0;
}
/* text caret */
.np-body::before {
  content: "";
  position: absolute;
  top: 1px;
  left: 2px;
  width: 1px;
  height: 26px;
  background: #111;
}
.np-text {
  flex: 1;
  margin: 0;
  overflow: hidden;
  padding: 1px 0 0 2px;
  color: #111;
  font-family: "Noto Sans", "Noto Sans CJK SC", sans-serif;
  font-size: 20.500px;
  line-height: 27px;
  tab-size: 96px;
  background: #fff;
}
.np-vscroll {
  position: relative;
  display: flex;
  flex-direction: column;
  align-items: center;
  width: 19px;
  flex: none;
  padding-top: 7px;
  background: #eee;
}
.np-thumb {
  width: 19px;
  height: 41px;
  margin-top: 7px;
  background: #ccc;
}
.np-down {
  margin-top: auto;
  margin-bottom: 7px;
}
.np-hscroll {
  display: flex;
  align-items: center;
  justify-content: space-between;
  height: 20px;
  flex: none;
  padding: 0 24px 0 6px;
  background: #eee;
}
.np-status {
  display: flex;
  align-items: center;
  height: 28px;
  flex: none;
  border-top: 1px solid #d9d9d9;
  background: #efefef;
  color: #222;
  font-size: 15.600px;
  white-space: nowrap;
}
.np-status span {
  height: 100%;
  padding-left: 9px;
  line-height: 27px;
  border-left: 1px solid #d9d9d9;
}
.np-s1 {
  width: 173px;
  margin-left: 890px;
  padding-left: 12px !important;
}
.np-s2 {
  width: 65px;
}
.np-s3 {
  width: 150px;
}
.np-s4 {
  flex: 1;
}
```
